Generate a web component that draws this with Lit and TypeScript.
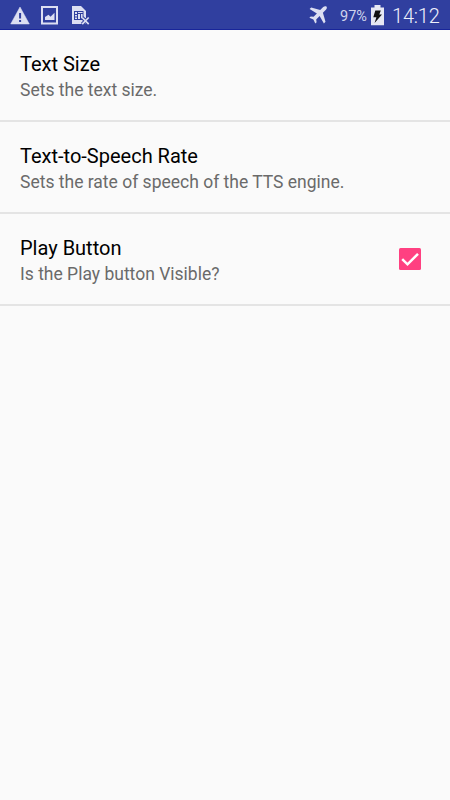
import { LitElement, html, css, svg, nothing } from "lit";
import { customElement, property, state } from "lit/decorators.js";

@customElement("status-bar")
class StatusBar extends LitElement {
  static styles = css`
    :host {
      display: flex;
      box-sizing: border-box;
      height: 30px;
      justify-content: space-between;
      background: #303f9f;
      border-bottom: 1px solid #18259a;
      color: #dcdff2;
      font-family: Roboto, sans-serif;
    }
    .group { display: flex; height: 30px; align-items: center; }
    svg { display: block; flex: none; }
    .battery { font-size: 14.5px; line-height: 30px; width: 27px; margin-left: 13px; white-space: nowrap; margin-top: 3px; color: #cfd3ec; }
    .cell { margin-left: 4px; }
    .time { font-size: 20px; line-height: 30px; width: 48px; margin: 2px 10px 0 8px; font-weight: 300; letter-spacing: -0.2px; white-space: nowrap; color: #eef0fb; }
  `;
  render() {
    return html`
      <div class="group">
        <svg width="100" height="30" viewBox="0 0 100 30">${svg`
          <path d="M20 7 L29.3 24 H10.7 Z" fill="#dcdff2" stroke="#dcdff2" stroke-width=".5" />
          <path d="M19.1 13h2v5.5h-2zM19.1 20h2v2h-2z" fill="#303f9f" />
          <path fill-rule="evenodd" d="M41 6h17v18.5H41zM43 8v14.5h13V8z" fill="#dcdff2" />
          <path d="M45 20V17L48.5 14.8L50.5 16.8L54.5 12.7V20Z" fill="#dcdff2" />
          <path d="M72 6H81L86 11V24H72Z" fill="#dcdff2" />
          <path d="M74 11H83.5V20H74Z" fill="#303f9f" />
          <path d="M75 12H77V14H75ZM75 15H77V16.6H75ZM75 17.4H77V19H75ZM78 14H80V19H78ZM81 14H82.6V19H81ZM78 12H82.6V13H78Z" fill="#dcdff2" />
          <path d="M82.2 17.5L88.7 24.2M88.7 17.5L82.2 24.2" stroke="#303f9f" stroke-width="3.6" />
          <path d="M82.2 17.5L88.7 24.2M88.7 17.5L82.2 24.2" stroke="#dcdff2" stroke-width="1.7" />
        `}</svg>
      </div>
      <div class="group">
        <svg width="18" height="18" viewBox="0 0 18 18">
          <path d="M17.4 .6C16.6 -.2 15.2 .1 14.2 1.1L11.2 4.1L2.2 1.5L.6 3.1L7.9 7.4L4.6 10.8L1.7 10.4L.4 11.7L4.4 13.6L6.3 17.6L7.6 16.3L7.2 13.4L10.6 10.1L14.9 17.4L16.5 15.8L13.9 6.8L16.9 3.8C17.9 2.8 18.2 1.4 17.4 .6Z" fill="#dcdff2" />
        </svg>
        <span class="battery">97%</span>
        <svg class="cell" width="13" height="21" viewBox="0 0 13 21">
          <path d="M3.5 0H9.5V2.5H13V20.3H0V2.5H3.5Z" fill="#e6e8f3" />
          <path d="M4.3 5.5H9.8L8.3 9.5H11L3.6 18L5.4 12.3H2.3Z" fill="#111" />
        </svg>
        <span class="time">14:12</span>
      </div>
    `;
  }
}

@customElement("preference-row")
class PreferenceRow extends LitElement {
  @property() heading = "";
  @property() summary = "";
  @property({ type: Boolean }) checkable = false;
  static styles = css`
    :host {
      display: flex;
      box-sizing: border-box;
      height: 92px;
      align-items: center;
      justify-content: space-between;
      padding: 0 29px 0 20px;
      border-bottom: 2px solid #e4e4e4;
      font-family: Roboto, sans-serif;
    }
    .text { padding-top: 4px; }
    .title { font-size: 20px; line-height: 26px; color: #000; }
    .summary { font-size: 17.5px; line-height: 27px; color: #6a6a6a; }
    svg { display: block; }
  `;
  render() {
    return html`
      <div class="text">
        <div class="title">${this.heading}</div>
        <div class="summary">${this.summary}</div>
      </div>
      ${this.checkable
        ? html`<svg width="22" height="22" viewBox="0 0 22 22">
            <rect width="22" height="22" rx="1.5" fill="#ff4081" />
            <path d="M3.2 11.2L8.5 16.3L19 5.8" fill="none" stroke="#fff" stroke-width="2.5" />
          </svg>`
        : nothing}
    `;
  }
}

@customElement("app-root")
class AppRoot extends LitElement {
  @state() private rows = [
    { heading: "Text Size", summary: "Sets the text size.", checkable: false },
    { heading: "Text-to-Speech Rate", summary: "Sets the rate of speech of the TTS engine.", checkable: false },
    { heading: "Play Button", summary: "Is the Play button Visible?", checkable: true },
  ];
  static styles = css`
    :host { display: block; height: 100vh; background: #fafafa; overflow: hidden; }
  `;
  render() {
    return html`
      <status-bar></status-bar>
      ${this.rows.map(
        (r) => html`<preference-row .heading=${r.heading} .summary=${r.summary} .checkable=${r.checkable}></preference-row>`
      )}
    `;
  }
}
